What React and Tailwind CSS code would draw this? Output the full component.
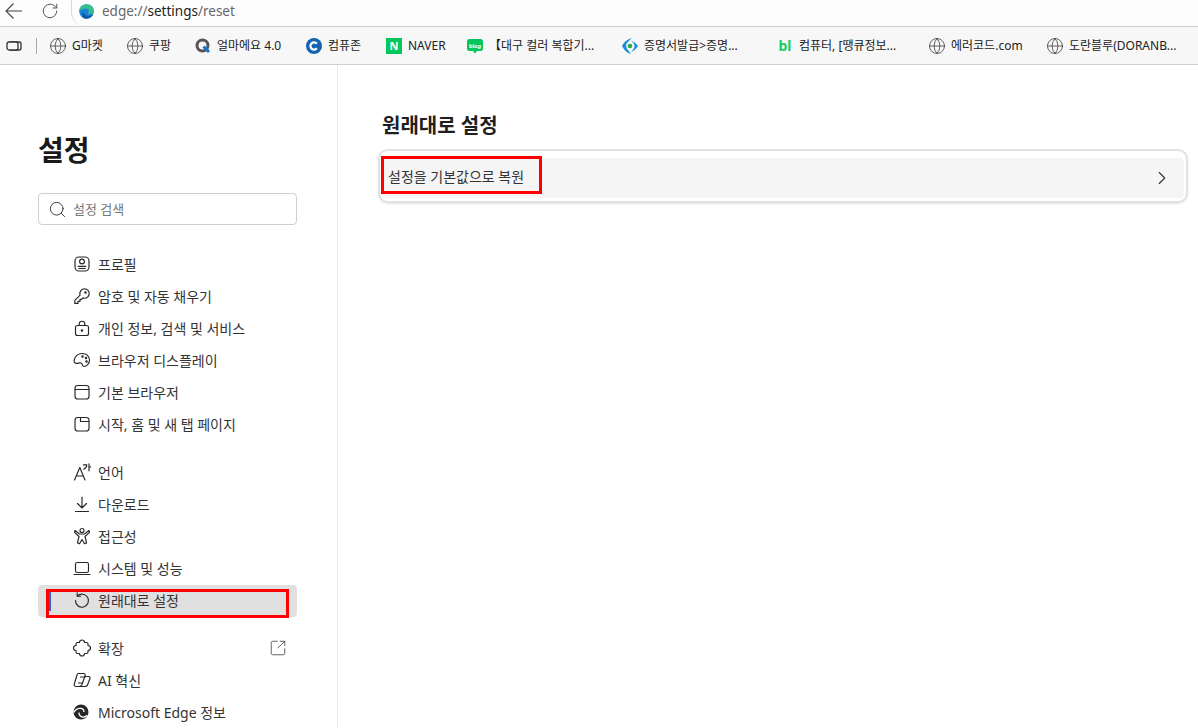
import React from 'react';
import { RotateCw, ChevronRight, Search, SquareArrowOutUpRight, Globe } from 'lucide-react';

const EdgeLogo = ({ size = 16 }) => (
  <svg width={size} height={size} viewBox="0 0 16 16">
    <circle cx="8" cy="8" r="7.8" fill="#1b84d6" />
    <path d="M.4 7.5C1.200 3 4.500.2 8.200.2c4.300 0 7.600 3.200 7.600 7 0 2.200-1.700 3.500-3.500 3.500-1.400 0-2.500-.5-2.900-1.100.7-.5 1.100-1.100 1.100-2C10.500 6 9.200 4.800 7.500 4.800 4.500 4.800 1.800 5.800.4 7.500z" fill="#35c08a" />
    <path d="M5.200 8.400c0 2.600 2.200 4.300 4.700 4.300 1.700 0 4-.7 5.300-2.200-1.100 3.200-3.900 5.300-7.100 5.300-1.700 0-3-.7-3.900-1.700C2.800 12 3.600 9.500 5.200 8.400z" fill="#0c59a4" />
  </svg>
);

const EdgeMono = () => (
  <svg width="16" height="16" viewBox="0 0 16 16" fill="none">
    <circle cx="8" cy="8" r="7.500" fill="#262626" />
    <path d="M.8 8.500C2.500 5.300 5.500 4 8 4.400c2 .4 3.200 1.800 2.900 3.600" stroke="#fff" strokeWidth="1.300" />
    <path d="M6 8.500c-.3 3 2.300 5 5 4.500 1.300-.2 2.300-.8 3.200-1.800" stroke="#fff" strokeWidth="1.300" />
  </svg>
);

const Line = ({ children }) => (
  <svg width="18" height="18" viewBox="0 0 18 18" fill="none" stroke="#262626" strokeWidth="1.150" strokeLinecap="round" strokeLinejoin="round">
    {children}
  </svg>
);

const bookmarks = [
  { w: 'w-[77px]', label: 'G마켓', icon: 'globe' },
  { w: 'w-[68px]', label: '쿠팡', icon: 'globe' },
  { w: 'w-[111px]', label: '얼마에요 4.0', icon: 'q' },
  { w: 'w-[80px]', label: '컴퓨존', icon: 'c' },
  { w: 'w-[81px]', label: 'NAVER', icon: 'n' },
  { w: 'w-[155px]', label: '【대구 컬러 복합기...', icon: 'blog' },
  { w: 'w-[155px]', label: '증명서발급>증명...', icon: 'eye' },
  { w: 'w-[152px]', label: '컴퓨터, [땡큐정보...', icon: 'bl' },
  { w: 'w-[118px]', label: '에러코드.com', icon: 'globe' },
  { w: 'w-[140px]', label: '도란블루(DORANB...', icon: 'globe' },
];

const BookmarkIcon = ({ type }) => {
  if (type === 'globe') return <Globe size={18} strokeWidth={1} color="#333" className="-mx-px" />;
  if (type === 'q') return (
    <svg width="16" height="16" viewBox="0 0 16 16" fill="none">
      <circle cx="7.500" cy="7.500" r="5.500" stroke="#555" strokeWidth="3" />
      <path d="M8.500 8.500l5.500 5.500" stroke="#1a75c9" strokeWidth="3" />
    </svg>
  );
  if (type === 'c') return (
    <svg width="16" height="16" viewBox="0 0 16 16" fill="none">
      <circle cx="8" cy="8" r="8" fill="#1463b3" />
      <path d="M10.800 5.700a3.600 3.600 0 1 0 0 4.600" stroke="#fff" strokeWidth="2.200" />
    </svg>
  );
  if (type === 'n') return (
    <span className="w-4 h-4 bg-[#03c75a] text-white text-[11px] leading-4 font-bold text-center block">N</span>
  );
  if (type === 'blog') return (
    <svg width="16" height="16" viewBox="0 0 16 16">
      <path d="M2.500 1h11A2.500 2.500 0 0 1 16 3.500v7a2.500 2.500 0 0 1-2.500 2.500H10l-2 2.500L6 13H2.500A2.500 2.500 0 0 1 0 10.500v-7A2.500 2.500 0 0 1 2.500 1z" fill="#03c75a" />
      <text x="8" y="9.500" textAnchor="middle" fontSize="5.500" fontWeight="700" fill="#fff">blog</text>
    </svg>
  );
  if (type === 'eye') return (
    <svg width="16" height="16" viewBox="0 0 16 16">
      <path d="M0 8C2 4 5 1.500 10 0 8 2 6.500 3 5.500 4.500 3.500 6 4 10 6 12l3 4C5 15 2 12 0 8z" fill="#1a8fd1" />
      <path d="M9 2.500c3 1 5 3 7 5.500-2 3-4 5-7 6 2-2 3.500-4 3.500-6S11 4 9 2.500z" fill="#1a8fd1" />
      <circle cx="8" cy="8" r="2.300" fill="#2aa84a" />
    </svg>
  );
  if (type === 'bl') return (
    <span className="w-4 h-4 text-[#19ce60] text-[14px] leading-4 font-bold text-center block">bl</span>
  );
  return null;
};

const NavItem = ({ icon, label, trailing, active }) => (
  <div className={`relative h-8 flex items-center pb-[2px] pl-[36px] pr-[10px] rounded-[4px] text-[14px] text-[#333] ${active ? 'bg-[#e0e0e0]' : ''}`}>
    {active && <span className="absolute left-[11px] top-[5px] w-[2px] h-[21px] bg-[#2f62d8]" />}
    <span className="w-[24px] -ml-[1px] mr-[1px] flex items-center shrink-0">{icon}</span>
    <span className="flex-1">{label}</span>
    {trailing}
    {active && <span className="absolute left-[8px] top-[4px] w-[243px] h-[29px] border-[3px] border-[#ff0000]" />}
  </div>
);

const groupA = [
  {
    label: '프로필',
    icon: <Line><rect x="2" y="2" width="14" height="14" rx="4" /><circle cx="9" cy="6.500" r="2.400" /><path d="M5.200 11.300h7.600M5.800 13.500h6.400" /></Line>,
  },
  {
    label: '암호 및 자동 채우기',
    icon: <Line><path d="M11.500 1.800a4.700 4.700 0 0 1 0 9.400c-.6 0-1-.1-1.500-.3L8.500 12.400H7v2H5v2H1.800v-3l5.300-5.300a4.700 4.700 0 0 1 4.400-6.300z" /><circle cx="12.500" cy="5.500" r=".7" /></Line>,
  },
  {
    label: '개인 정보, 검색 및 서비스',
    icon: <Line><rect x="2.500" y="6.500" width="13" height="10" rx="2" /><path d="M6.200 6.500V5a2.800 2.800 0 0 1 5.600 0v1.500" /><circle cx="9" cy="11.500" r=".7" fill="#262626" /></Line>,
  },
  {
    label: '브라우저 디스플레이',
    icon: <Line><path d="M9.500 2.500c4 0 7 2.800 7 6.500s-3 6.500-5.500 6.500c-2.200 0-1-3-3-3.500s-3.500 1-5.500.2S.8 8.500 2.500 6 6.500 2.500 9.500 2.500z" /><circle cx="13" cy="7" r=".7" /><circle cx="13.500" cy="10.500" r=".7" /><circle cx="9.500" cy="5.500" r=".7" /></Line>,
  },
  {
    label: '기본 브라우저',
    icon: <Line><rect x="2" y="2.500" width="14" height="13.500" rx="2.800" /><path d="M2 6.500h14" /></Line>,
  },
  {
    label: '시작, 홈 및 새 탭 페이지',
    icon: <Line><rect x="2" y="2.500" width="14" height="13.500" rx="2.800" /><path d="M7.500 2.500v4h8.500" /></Line>,
  },
];

const groupB = [
  {
    label: '언어',
    icon: <Line><path d="M1.500 17 6.800 4.500 12 17M3.300 13h7" /><path d="M10.500 1.800h3.300c0 2-1 3.500-3 4.500M16 .8v7M16 3.800h1.500" /></Line>,
  },
  {
    label: '다운로드',
    icon: <Line><path d="M9 2v11M4.500 8.500 9 13l4.500-4.500M2.500 16.500h13" /></Line>,
  },
  {
    label: '접근성',
    icon: <Line><circle cx="9" cy="3.500" r="2" /><path d="M2 3.500 6.500 7h5L16 3.500l.5 1.800L12 9.500l1.500 6.500-2 .8L9 12.500 6.500 16.800l-2-.8L6 9.500 1.500 5.300z" /></Line>,
  },
  {
    label: '시스템 및 성능',
    icon: <Line><rect x="2.500" y="3.500" width="13" height="10" rx="1.800" /><path d="M1 15.500h16" /></Line>,
  },
  {
    label: '원래대로 설정',
    icon: <Line><path d="M4.500 5A6.500 6.500 0 1 1 2.500 9.500" /><path d="M4.200 1.800V5.200H7.600" /></Line>,
    active: true,
  },
];

const groupC = [
  {
    label: '확장',
    icon: <Line><path d="M6.500 3.500a2.500 2.500 0 0 1 5 0h2A1.500 1.500 0 0 1 15 5v1.500a2.500 2.500 0 0 1 0 5V13a1.500 1.500 0 0 1-1.500 1.500h-2a2.500 2.500 0 0 1-5 0h-2A1.500 1.500 0 0 1 3 13v-1.500a2.500 2.500 0 0 1 0-5V5a1.500 1.500 0 0 1 1.500-1.500z" /></Line>,
    trailing: <SquareArrowOutUpRight size={18} strokeWidth={1} color="#333" />,
  },
  {
    label: 'AI 혁신',
    icon: <Line><path d="M5.500 2.500h5c1.500 0 2 1.200 1.500 2.500L9 13.500c-.5 1.300-1.500 2-3 2H3c-1.500 0-2.200-1.200-1.700-2.500L4 4c.3-1 .7-1.500 1.500-1.500z" /><path d="M12 5.500h3.500c1.200 0 1.800 1 1.400 2.200l-2.300 6c-.4 1.100-1.100 1.800-2.600 1.800H6" /><path d="M7.500 6h4.500M5.500 12h4" /></Line>,
  },
  { label: 'Microsoft Edge 정보', icon: <EdgeMono /> },
];

export default function App() {
  return (
    <div className="w-[1198px] h-[728px] overflow-hidden bg-white flex flex-col [font-family:'Noto_Sans','Noto_Sans_CJK_KR',sans-serif]">
      {/* address bar */}
      <div className="h-[27px] shrink-0 bg-[#fdfdfd] border-b border-[#d0d0d0] flex items-center">
        <svg width="18" height="18" viewBox="0 0 18 18" fill="none" stroke="#444" strokeWidth="1.100" className="ml-[5px] mb-[4px]">
          <path d="M1 9h16M8.500 1.500 1 9l7.500 7.500" />
        </svg>
        <RotateCw size={18} strokeWidth={1.200} color="#444" className="ml-[18px] mb-[4px]" />
        <div className="ml-[12px] flex-1 h-full border-l border-[#d8d8d8] rounded-bl-[14px] flex items-center pl-[7px] pb-[4px]">
          <EdgeLogo size={15} />
          <span className="ml-[8px] text-[13.500px] text-[#666]">
            edge://<span className="text-[#222]">settings</span>/reset
          </span>
        </div>
      </div>

      {/* bookmarks */}
      <div className="h-[38px] shrink-0 bg-[#f7f7f7] border-b border-[#d0d0d0] flex items-center pl-[6px] text-[12px] text-[#222]">
        <svg width="16" height="16" viewBox="0 0 16 16" fill="none" stroke="#333" strokeWidth="1.300">
          <rect x="3" y="4" width="12" height="8" rx="2" />
          <rect x="1" y="4" width="11" height="8" rx="2" fill="#f7f7f7" />
        </svg>
        <span className="ml-[14px] mr-[13px] w-px h-[16px] bg-[#aaa]" />
        {bookmarks.map((b) => (
          <div key={b.label} className={`${b.w} shrink-0 flex items-center gap-[6px] whitespace-nowrap`}>
            <BookmarkIcon type={b.icon} />
            <span>{b.label}</span>
          </div>
        ))}
      </div>

      <div className="flex-1 flex min-h-0">
        {/* sidebar */}
        <aside className="w-[338px] shrink-0 border-r border-[#ebebeb] pl-[38px] pr-[40px]">
          <h1 className="mt-[65px] h-[40px] leading-[40px] text-[28px] font-bold text-[#1a1a1a]">설정</h1>
          <div className="mt-[23px] h-[32px] border border-[#cfcfcf] rounded-[4px] flex items-center pl-[9px] text-[13px] text-[#777]">
            <Search size={19} strokeWidth={1.100} color="#262626" />
            <span className="ml-[6px] pt-[1px]">설정 검색</span>
          </div>
          <nav className="mt-[24px] flex flex-col">
            {groupA.map((item) => <NavItem key={item.label} {...item} />)}
            <div className="h-4" />
            {groupB.map((item) => <NavItem key={item.label} {...item} />)}
            <div className="h-4" />
            {groupC.map((item) => <NavItem key={item.label} {...item} />)}
          </nav>
        </aside>

        {/* content */}
        <main className="flex-1 pl-[40px] pr-[10px]">
          <h2 className="mt-[47px] h-[28px] leading-[28px] ml-[4px] text-[20px] font-bold text-[#1f1f1f]">원래대로 설정</h2>
          <div className="relative mt-[9px] h-[54px] border-2 border-[#e2e2e2] rounded-[10px] shadow-[0_1px_2px_rgba(0,0,0,0.12)] p-[7px_2px_3px_2px]">
            <div className="h-[40px] bg-[#f5f5f5] rounded-[4px] flex items-center justify-between pl-[6px] pr-[11px] text-[14px] text-[#333]">
              <span className="mb-[3px]">설정을 기본값으로 복원</span>
              <ChevronRight size={22} strokeWidth={1.200} color="#333" />
            </div>
            <span className="absolute left-[1px] top-[5px] w-[161px] h-[38px] border-[3px] border-[#ff0000]" />
          </div>
        </main>
      </div>
    </div>
  );
}
